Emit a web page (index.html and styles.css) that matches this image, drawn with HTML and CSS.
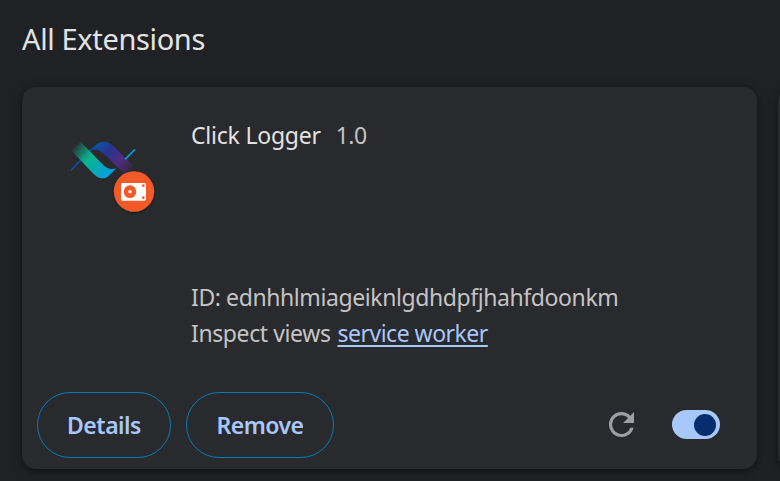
FILE: index.html
```html
<!DOCTYPE html>
<html lang="en">
<head>
<meta charset="utf-8">
<title>Extensions</title>
<link rel="stylesheet" href="styles.css">
</head>
<body>
<main class="page">
  <h1 class="heading"><span>All Extensions</span></h1>
  <div class="cards">
    <article class="card">
      <div class="main">
        <svg class="logo" viewBox="0 0 330 285" aria-hidden="true">
          <defs>
            <linearGradient id="green" gradientUnits="userSpaceOnUse" x1="38" y1="62" x2="150" y2="155">
              <stop offset="0" stop-color="#10b58a" stop-opacity="0"/>
              <stop offset=".42" stop-color="#0bb38c"/>
              <stop offset="1" stop-color="#009fe3"/>
            </linearGradient>
            <linearGradient id="purple" gradientUnits="userSpaceOnUse" x1="95" y1="60" x2="215" y2="145">
              <stop offset="0" stop-color="#0758a8"/>
              <stop offset=".35" stop-color="#29348e"/>
              <stop offset=".65" stop-color="#512b82"/>
              <stop offset="1" stop-color="#512b82" stop-opacity="0"/>
            </linearGradient>
            <filter id="shade" x="-20%" y="-20%" width="140%" height="150%">
              <feDropShadow dx="0" dy="4" stdDeviation="3" flood-opacity=".4"/>
            </filter>
          </defs>
          <path d="M33 136L92 74" stroke="#07529c" stroke-width="5"/>
          <path d="M88 78C114 51 121 50 132 50C146 50 153 56 165 68L220 124L196 149L132 87C118 73 106 69 88 78Z" fill="url(#purple)"/>
          <path d="M35 77L62 50L123 113C139 130 153 137 169 129C148 151 142 160 129 160C115 160 107 153 95 141Z" fill="url(#green)"/>
          <path d="M195 103L225 73" stroke="#009fe3" stroke-width="5"/>
          <circle cx="222" cy="199.500" r="60.500" fill="#f35a29" filter="url(#shade)"/>
          <rect x="183" y="174" width="75" height="53" rx="5" fill="#fff"/>
          <circle cx="210" cy="200" r="19" fill="#f35a29"/>
          <circle cx="210" cy="200" r="5" fill="#fff"/>
          <circle cx="250" cy="182" r="4" fill="#f35a29"/>
          <circle cx="250" cy="218" r="4" fill="#f35a29"/>
        </svg>
        <div class="info">
          <div class="title"><span class="name">Click Logger</span><span class="version">1.0</span></div>
          <div class="meta">
            <div><span class="ident">ID: ednhhlmiageiknlgdhdpfjhahfdoonkm</span></div>
            <div class="views"><span class="inspect">Inspect views</span><a class="link">service worker</a></div>
          </div>
        </div>
      </div>
      <div class="actions">
        <button class="button details"><span>Details</span></button>
        <button class="button remove"><span>Remove</span></button>
        <svg class="reload" viewBox="4 4 16 16" aria-hidden="true"><path d="M17.65 6.35A7.96 7.96 0 0 0 12 4a8 8 0 1 0 7.73 10h-2.08A6 6 0 1 1 12 6c1.66 0 3.14.69 4.22 1.78L13 11h7V4z"/></svg>
        <div class="toggle"><div class="knob"></div></div>
      </div>
    </article>
    <article class="card"></article>
  </div>
</main>
</body>
</html>
```
FILE: styles.css
```css
* { box-sizing: border-box; }
body {
  margin: 0;
  background: #202124;
  color: #e3e3e3;
  font-family: "Noto Sans", "Open Sans", sans-serif;
  overflow: hidden;
}
.page { height: 481px; padding: 19px 0 0 22px; overflow: hidden; }
.heading { margin: 0; height: 68px; font-size: 29px; font-weight: 400; line-height: 40px; letter-spacing: -.36px; white-space: nowrap; }
.cards { display: grid; grid-template-columns: 735px 735px; gap: 21px; }
.card {
  display: flex;
  flex-direction: column;
  height: 382px;
  border-radius: 14px;
  background: #292a2d;
  box-shadow: 0 2px 4px rgba(0,0,0,.3), 0 3px 12px 2px rgba(0,0,0,.18);
}
.main { display: flex; height: 305px; padding: 38px 0 0 38px; }
.logo { width: 110px; height: 95px; flex: none; }
.info { display: flex; flex-direction: column; margin-left: 21px; font-size: 23px; line-height: 36px; white-space: nowrap; }
.title { display: flex; gap: 15px; margin-top: -8px; height: 162px; }
.name { letter-spacing: -.22px; }
.version { letter-spacing: -.6px; }
.version, .meta { color: #c4c4c4; }
.ident { letter-spacing: -.41px; }
.views { display: flex; gap: 7px; }
.inspect { letter-spacing: -.4px; }
.link { color: #a8c7fa; letter-spacing: -.5px; text-decoration: underline; text-decoration-thickness: 2px; text-underline-offset: 3px; }
.actions { display: flex; align-items: center; height: 66px; padding-left: 15px; }
.button {
  height: 66px;
  padding: 0;
  border: 1px solid #047db7;
  border-radius: 33px;
  background: transparent;
  color: #a8c7fa;
  font: 600 23px/36px "Noto Sans", sans-serif;
  letter-spacing: -.5px;
}
.details { width: 134px; }
.remove { width: 148px; margin-left: 15px; }
.reload { width: 25px; height: 25px; margin: 0 0 1px 275px; fill: #9aa0a6; }
.toggle { display: flex; align-items: center; justify-content: flex-end; width: 48px; height: 29px; margin: 0 0 1px 38px; padding-right: 4px; border-radius: 15px; background: #a8c7fa; }
.knob { width: 22px; height: 22px; border-radius: 50%; background: #062e6f; }
```
